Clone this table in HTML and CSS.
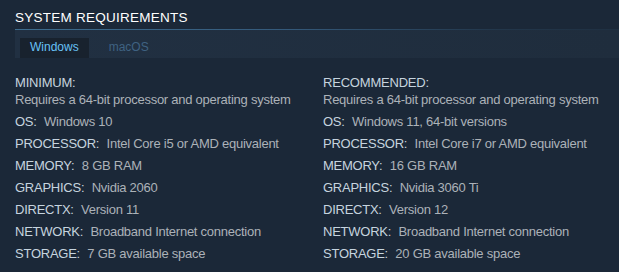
FILE: index.html
```html
<!DOCTYPE html>
<html lang="en">
<head>
<meta charset="utf-8">
<title>System Requirements</title>
<link rel="stylesheet" href="styles.css">
</head>
<body>
<section class="sysreq">
  <h2 class="sysreq-title">System Requirements</h2>
  <div class="sysreq-rule"></div>
  <div class="tabs">
    <div class="tab active">Windows</div>
    <div class="tab">macOS</div>
  </div>
  <div class="cols">
    <div class="col">
      <div class="col-title">MINIMUM:</div>
      <ul class="req-list">
        <li>Requires a 64-bit processor and operating system</li>
        <li><span class="lbl">OS:</span> Windows 10</li>
        <li><span class="lbl">PROCESSOR:</span> Intel Core i5 or AMD equivalent</li>
        <li><span class="lbl">MEMORY:</span> 8 GB RAM</li>
        <li><span class="lbl">GRAPHICS:</span> Nvidia 2060</li>
        <li><span class="lbl">DIRECTX:</span> Version 11</li>
        <li><span class="lbl">NETWORK:</span> Broadband Internet connection</li>
        <li><span class="lbl">STORAGE:</span> 7 GB available space</li>
      </ul>
    </div>
    <div class="col">
      <div class="col-title">RECOMMENDED:</div>
      <ul class="req-list">
        <li>Requires a 64-bit processor and operating system</li>
        <li><span class="lbl">OS:</span> Windows 11, 64-bit versions</li>
        <li><span class="lbl">PROCESSOR:</span> Intel Core i7 or AMD equivalent</li>
        <li><span class="lbl">MEMORY:</span> 16 GB RAM</li>
        <li><span class="lbl">GRAPHICS:</span> Nvidia 3060 Ti</li>
        <li><span class="lbl">DIRECTX:</span> Version 12</li>
        <li><span class="lbl">NETWORK:</span> Broadband Internet connection</li>
        <li><span class="lbl">STORAGE:</span> 20 GB available space</li>
      </ul>
    </div>
  </div>
</section>
</body>
</html>
```

FILE: styles.css
```css
html, body {
  margin: 0;
  padding: 0;
  background: #1b2838;
}

body {
  font-family: "Liberation Sans", Arial, sans-serif;
  color: #acb2b8;
}

.sysreq {
  padding-left: 15px;
}

.sysreq-title {
  margin: 0;
  padding: 10px 0 3px;
  font-size: 13.5px;
  line-height: 16px;
  font-weight: normal;
  text-transform: uppercase;
  letter-spacing: 0.25px;
  color: #ffffff;
}

.sysreq-rule {
  height: 1px;
  background: linear-gradient(to right, #3e6d8e 0%, #34597a 45%, #22364a 80%, #1f3042 100%);
}

.tabs {
  height: 28px;
  box-sizing: border-box;
  padding: 8px 0 0 5px;
  display: flex;
  align-items: flex-end;
  gap: 10px;
  background: linear-gradient(to right, #213042 0%, #1f2d3d 100%);
}

.tab {
  padding: 0 10px 2px;
  font-size: 12px;
  line-height: 18px;
  color: #3f6282;
}

.tab.active {
  background: #18222e;
  color: #67c1f5;
}

.cols {
  display: grid;
  grid-template-columns: 308px 1fr;
  margin-top: 16px;
}

.col-title {
  font-size: 13px;
  line-height: 17px;
  color: #c6d4df;
  letter-spacing: -0.2px;
}

.req-list {
  list-style: none;
  margin: 0;
  padding: 0;
}

.req-list li {
  font-size: 13px;
  line-height: 18px;
  margin-bottom: 4px;
  letter-spacing: -0.25px;
  white-space: nowrap;
}

.lbl {
  color: #c6d4df;
  margin-right: 4px;
}
```
